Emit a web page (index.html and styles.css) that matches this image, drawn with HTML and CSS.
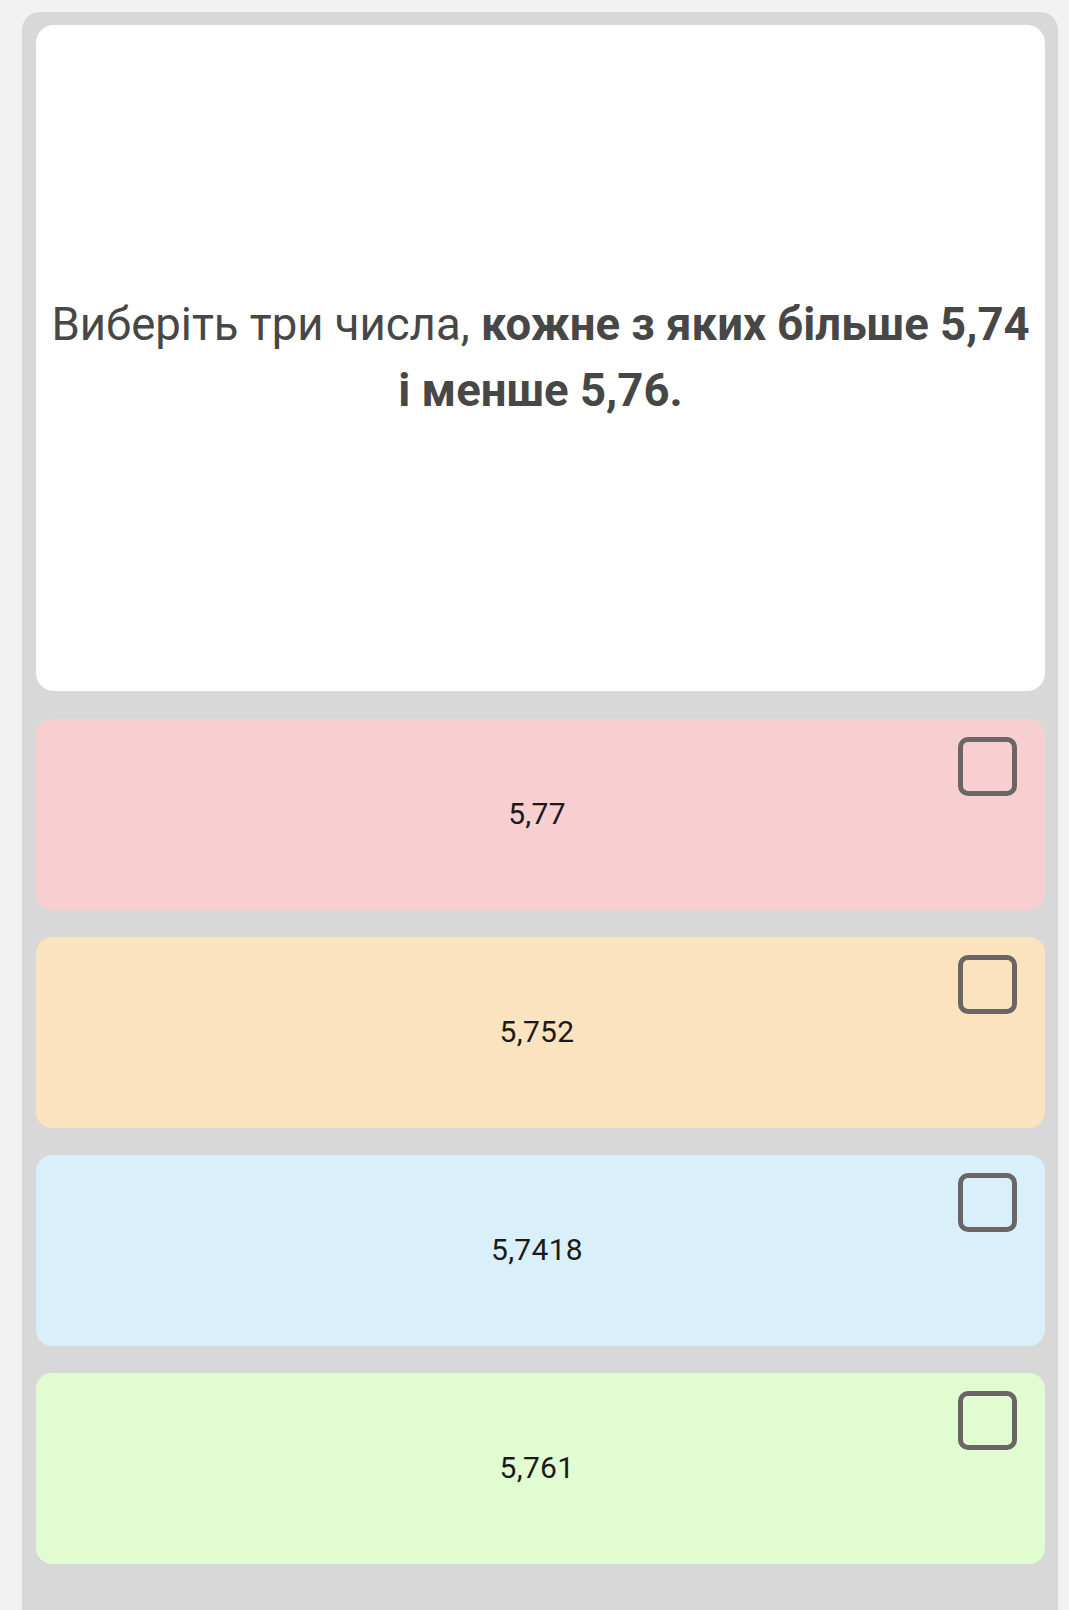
FILE: index.html
```html
<!DOCTYPE html>
<html lang="uk">
<head>
<meta charset="UTF-8" />
<meta name="viewport" content="width=device-width, initial-scale=1" />
<title>Тест</title>
<link rel="stylesheet" href="styles.css">
</head>
<body>

<div class="quiz">

  <div class="question">
    <p>Виберіть три числа, <strong>кожне з яких більше 5,74 і менше 5,76.</strong></p>
  </div>

  <div class="options">
    <label class="option pink">
      <span class="value">5,77</span>
      <span class="check"></span>
    </label>
    <label class="option orange">
      <span class="value">5,752</span>
      <span class="check"></span>
    </label>
    <label class="option blue">
      <span class="value">5,7418</span>
      <span class="check"></span>
    </label>
    <label class="option green">
      <span class="value">5,761</span>
      <span class="check"></span>
    </label>
  </div>

</div>

</body>
</html>
```

FILE: styles.css
```css
body {
  margin: 0;
  background: #f2f2f2;
  font-family: Roboto, "Noto Sans", sans-serif;
  overflow: hidden;
}

.quiz {
  margin: 12px 11px 0 22px;
  padding: 13px 13px 60px 14px;
  background: #d8d8d8;
  border-radius: 18px 18px 0 0;
  min-height: 1600px;
}

.question {
  background: #fff;
  border-radius: 18px;
  height: 666px;
  display: flex;
  align-items: center;
  justify-content: center;
  text-align: center;
  padding: 0 12px;
  box-sizing: border-box;
}

.question p {
  margin: 0;
  font-size: 45.5px;
  line-height: 66px;
  color: #474747;
}

.question strong {
  font-weight: 700;
}

.options {
  margin-top: 28px;
  display: flex;
  flex-direction: column;
  gap: 27px;
}

.option {
  position: relative;
  height: 191px;
  border-radius: 16px;
  display: flex;
  align-items: center;
  justify-content: center;
  cursor: pointer;
}

.option .value {
  font-size: 30px;
  letter-spacing: 0.3px;
  color: #1a1a1a;
  margin: -2px 7px 0 0;
}

.check {
  position: absolute;
  top: 18px;
  right: 28px;
  width: 49px;
  height: 49px;
  border: 5px solid #6b6565;
  border-radius: 10px;
}

.pink { background: #f7cfd0; }
.orange { background: #fce3bf; }
.blue { background: #d9f0fa; }
.green { background: #e2fcd2; }
```
